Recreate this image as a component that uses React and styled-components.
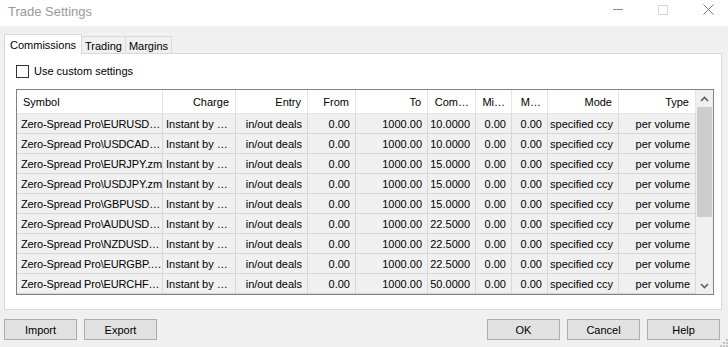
import React from 'react';
import styled, { createGlobalStyle } from 'styled-components';

const GlobalStyle = createGlobalStyle`
  * { box-sizing: border-box; }
  html, body { margin: 0; padding: 0; background: #f0f0f0; }
  body { font-family: "Liberation Sans", Arial, sans-serif; font-size: 11px; color: #000; }
`;

const columns = [
  { key: 'symbol', title: 'Symbol', width: 146, align: 'left', bodyAlign: 'left' },
  { key: 'charge', title: 'Charge', width: 73, align: 'right', bodyAlign: 'left' },
  { key: 'entry', title: 'Entry', width: 72, align: 'right', bodyAlign: 'right' },
  { key: 'from', title: 'From', width: 48, align: 'right', bodyAlign: 'right' },
  { key: 'to', title: 'To', width: 72, align: 'right', bodyAlign: 'right' },
  { key: 'com', title: 'Com\u2026', width: 48, align: 'right', bodyAlign: 'right' },
  { key: 'min', title: 'Mi\u2026', width: 36, align: 'right', bodyAlign: 'right' },
  { key: 'max', title: 'M\u2026', width: 36, align: 'right', bodyAlign: 'right' },
  { key: 'mode', title: 'Mode', width: 71, align: 'right', bodyAlign: 'right' },
  { key: 'type', title: 'Type', width: 77, align: 'right', bodyAlign: 'right' },
];

const rows = [
  ['EURUSD\u2026', '10.0000'],
  ['USDCAD\u2026', '10.0000'],
  ['EURJPY.zm', '15.0000'],
  ['USDJPY.zm', '15.0000'],
  ['GBPUSD\u2026', '15.0000'],
  ['AUDUSD\u2026', '22.5000'],
  ['NZDUSD\u2026', '22.5000'],
  ['EURGBP.\u2026', '22.5000'],
  ['EURCHF\u2026', '50.0000'],
].map(([sym, com]) => ({
  symbol: 'Zero-Spread Pro\\' + sym,
  charge: 'Instant by \u2026',
  entry: 'in/out deals',
  from: '0.00',
  to: '1000.00',
  com,
  min: '0.00',
  max: '0.00',
  mode: 'specified ccy',
  type: 'per volume',
}));

const template = columns.map((c) => c.width + 'px').join(' ');

const App = () => {
  return (
    <Window>
      <GlobalStyle />
      <TitleBar>
        <Title>Trade Settings</Title>
        <Controls>
          <Minimize />
          <Maximize />
          <CloseIcon width="11" height="11" viewBox="0 0 11 11">
            <path d="M0.5 0.5 L10.5 10.5 M10.5 0.5 L0.5 10.5" stroke="#7a7a7a" strokeWidth="1" />
          </CloseIcon>
        </Controls>
      </TitleBar>

      <Body>
        <Tabs>
          <Tab active>Commissions</Tab>
          <Tab>Trading</Tab>
          <Tab>Margins</Tab>
        </Tabs>

        <Panel>
          <CheckRow>
            <CheckBox />
            <span>Use custom settings</span>
          </CheckRow>

          <GridFrame>
            <Table>
              <Row header>
                {columns.map((c) => (
                  <Cell key={c.key} header align={c.align} first={c.key === 'symbol'}>
                    {c.title}
                  </Cell>
                ))}
              </Row>
              {rows.map((r, i) => (
                <Row key={i}>
                  {columns.map((c) => (
                    <Cell key={c.key} align={c.bodyAlign} first={c.key === 'symbol'}>
                      {r[c.key]}
                    </Cell>
                  ))}
                </Row>
              ))}
            </Table>
            <ScrollBar>
              <Arrow>
                <svg width="9" height="6" viewBox="0 0 9 6">
                  <path d="M1 5 L4.5 1.5 L8 5" stroke="#606060" strokeWidth="1.6" fill="none" />
                </svg>
              </Arrow>
              <Track>
                <Thumb />
              </Track>
              <Arrow>
                <svg width="9" height="6" viewBox="0 0 9 6">
                  <path d="M1 1 L4.5 4.5 L8 1" stroke="#606060" strokeWidth="1.6" fill="none" />
                </svg>
              </Arrow>
            </ScrollBar>
          </GridFrame>
        </Panel>

        <ButtonBar>
          <ButtonGroup>
            <Button>Import</Button>
            <Button>Export</Button>
          </ButtonGroup>
          <ButtonGroup>
            <Button>OK</Button>
            <Button>Cancel</Button>
            <Button>Help</Button>
          </ButtonGroup>
        </ButtonBar>
      </Body>

      <Grip width="10" height="10" viewBox="0 0 10 10">
        {[[8, 0], [8, 3], [5, 3], [8, 6], [5, 6], [2, 6]].map(([x, y]) => (
          <rect key={x + '-' + y} x={x} y={y + 2} width="2" height="2" fill="#c4c4c4" />
        ))}
      </Grip>
    </Window>
  );
};

export default App;

const Window = styled.div`
  position: relative;
  width: 728px;
  height: 347px;
  background: #f0f0f0;
  display: flex;
  flex-direction: column;
  overflow: hidden;
`;

const TitleBar = styled.div`
  height: 26px;
  background: #ffffff;
  display: flex;
  align-items: center;
  justify-content: space-between;
  padding-left: 8px;
`;

const Title = styled.div`
  font-size: 13px;
  color: #9a9a9a;
  margin-top: -3px;
`;

const Controls = styled.div`
  display: flex;
  align-items: center;
  gap: 35px;
  padding-right: 14px;
  margin-top: -7px;
`;

const Minimize = styled.div`
  width: 10px;
  height: 1px;
  background: #8a8a8a;
`;

const Maximize = styled.div`
  width: 10px;
  height: 10px;
  border: 1px solid #d6d6d6;
`;

const CloseIcon = styled.svg`
  display: block;
`;

const Body = styled.div`
  flex: 1;
  display: flex;
  flex-direction: column;
  padding: 8px 6px 0 4px;
`;

const Tabs = styled.div`
  display: flex;
  align-items: flex-end;
  height: 20px;
  position: relative;
  z-index: 1;
  margin-bottom: -1px;
`;

const Tab = styled.div`
  height: ${(p) => (p.active ? '21px' : '18px')};
  padding: ${(p) => (p.active ? '4px 5px 0 5px' : '3px 3px 0 3px')};
  margin-bottom: ${(p) => (p.active ? '-1px' : '0')};
  background: ${(p) => (p.active ? '#ffffff' : '#f0f0f0')};
  border: 1px solid #d9d9d9;
  border-bottom: ${(p) => (p.active ? 'none' : '1px solid #d9d9d9')};
  border-left: ${(p) => (p.active ? '1px solid #d9d9d9' : 'none')};
  white-space: nowrap;
  font-size: 11px;
`;

const Panel = styled.div`
  height: 257px;
  background: #ffffff;
  border: 1px solid #d9d9d9;
  padding: 10px 8px 0 11px;
  display: flex;
  flex-direction: column;
`;

const CheckRow = styled.div`
  display: flex;
  align-items: center;
  gap: 5px;
  height: 14px;
  font-size: 11px;
`;

const CheckBox = styled.div`
  width: 13px;
  height: 13px;
  border: 1px solid #333333;
  background: #ffffff;
`;

const GridFrame = styled.div`
  margin-top: 11px;
  width: 698px;
  height: 206px;
  border: 1px solid #828282;
  display: flex;
  background: #f0f0f0;
`;

const Table = styled.div`
  display: flex;
  flex-direction: column;
  width: 679px;
`;

const Row = styled.div`
  display: grid;
  grid-template-columns: ${template};
  flex: none;
  height: ${(p) => (p.header ? '24px' : '20px')};
  background: ${(p) => (p.header ? '#ffffff' : '#f0f0f0')};
  border-bottom: 1px solid ${(p) => (p.header ? '#e5e5e5' : '#d7d7d7')};
`;

const Cell = styled.div`
  display: flex;
  align-items: center;
  justify-content: ${(p) => (p.align === 'left' ? 'flex-start' : 'flex-end')};
  padding: ${(p) =>
    p.header
      ? (p.first ? '0 4px 0 6px' : '0 6px 0 3px')
      : (p.align === 'left' ? (p.first ? '0 1px 0 4px' : '0 2px 0 3px') : '0 5px 0 2px')};
  border-right: 1px solid ${(p) => (p.header ? '#e5e5e5' : '#d7d7d7')};
  white-space: nowrap;
  overflow: hidden;
  font-size: 11px;
  line-height: 14px;
  letter-spacing: ${(p) => (p.first && !p.header ? '-0.15px' : '0')};
`;

const ScrollBar = styled.div`
  width: 17px;
  display: flex;
  flex-direction: column;
  background: #f0f0f0;
`;

const Arrow = styled.div`
  height: 17px;
  display: flex;
  align-items: center;
  justify-content: center;
`;

const Track = styled.div`
  flex: 1;
  padding: 0 1px;
`;

const Thumb = styled.div`
  height: 110px;
  background: #cdcdcd;
`;

const ButtonBar = styled.div`
  display: flex;
  justify-content: space-between;
  margin-top: 9px;
  padding-right: 2px;
`;

const ButtonGroup = styled.div`
  display: flex;
  gap: 7px;
`;

const Button = styled.button`
  width: 73px;
  height: 21px;
  padding: 0;
  background: #e1e1e1;
  border: 1px solid #adadad;
  font-family: "Liberation Sans", Arial, sans-serif;
  font-size: 11px;
  color: #000;
`;

const Grip = styled.svg`
  position: absolute;
  right: 0;
  bottom: 0;
`;
